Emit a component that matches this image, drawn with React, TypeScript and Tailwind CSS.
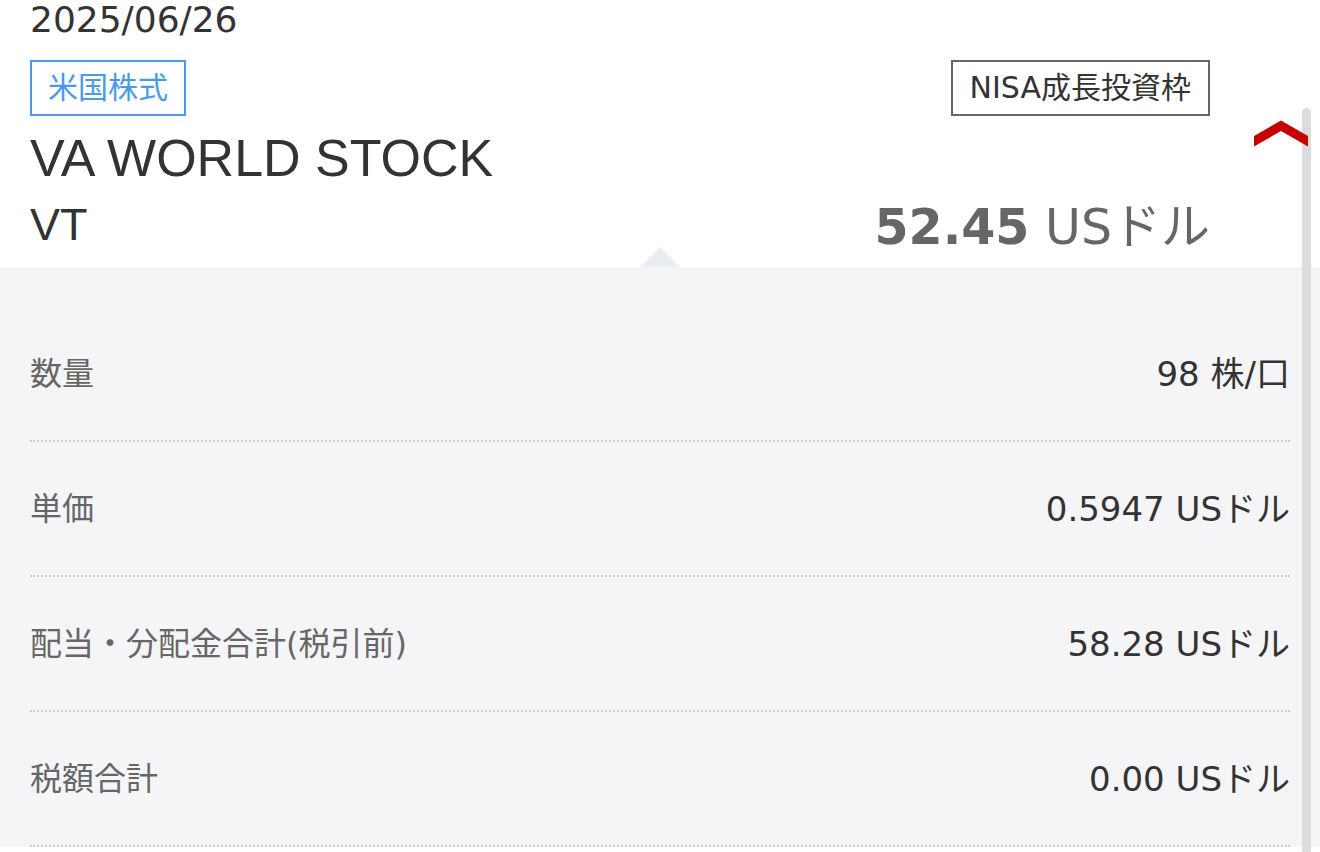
const rows = [
  { label: "数量", value: "98 株/口" },
  { label: "単価", value: "0.5947 USドル" },
  { label: "配当・分配金合計(税引前)", value: "58.28 USドル" },
  { label: "税額合計", value: "0.00 USドル" },
];

function Chevron() {
  return (
    <svg width="54" height="30" viewBox="0 0 54 30" className="block">
      <polygon points="0,18 27,2.5 54,18 54,28.5 27,13 0,28.5" fill="#c40000" />
    </svg>
  );
}

export default function App() {
  return (
    <div className="relative w-[1320px] h-[852px] overflow-hidden bg-white font-['DejaVu_Sans','Noto_Sans_CJK_JP',sans-serif]">
      {/* Header */}
      <header className="pl-[30px] pr-[12px] pb-[11px]">
        <div className="text-[36px] leading-[40px] text-[#333]">2025/06/26</div>
        <div className="mt-[20px] flex items-start">
          <div className="flex-1">
            <span className="inline-block h-[56px] border-2 border-[#4b9ae8] px-[16px] text-[30px] leading-[52px] text-[#4b9ae8]">
              米国株式
            </span>
            <div className="mt-[10px] font-['Liberation_Sans','Noto_Sans_CJK_JP',sans-serif] text-[52px] leading-[64px] text-[#333]">
              VA WORLD STOCK
            </div>
            <div className="mt-[10px] font-['Liberation_Sans','Noto_Sans_CJK_JP',sans-serif] text-[45px] leading-[50px] text-[#333]">
              VT
            </div>
          </div>
          <div className="flex flex-col items-end">
            <span className="inline-block h-[56px] border-2 border-[#666] px-[17px] text-[30px] leading-[52px] text-[#333]">
              NISA成長投資枠
            </span>
            <div className="mt-[84px] text-[49px] leading-[56px] text-[#666]">
              <span className="font-bold">52.45</span> USドル
            </div>
          </div>
          <button className="relative z-10 ml-[44px] mt-[58px]">
            <Chevron />
          </button>
        </div>
      </header>

      {/* Detail panel */}
      <main className="relative bg-[#f5f5f7] px-[30px] pt-[40px]">
        <div className="absolute left-[640px] top-[-20px] h-0 w-0 border-x-[20px] border-b-[20px] border-x-transparent border-b-[#e8edf4]" />
        {rows.map((r) => (
          <div
            key={r.label}
            className="flex h-[135px] items-center justify-between border-b-2 border-dotted border-[#cdcdcd]"
          >
            <span className="text-[32px] leading-none text-[#666]">{r.label}</span>
            <span className="text-[34px] leading-none text-[#333]">{r.value}</span>
          </div>
        ))}
      </main>

      {/* scroll indicator */}
      <div className="absolute left-[1302px] top-[108px] h-[800px] w-[9px] rounded-full bg-[#dcdcdc]" />
    </div>
  );
}
